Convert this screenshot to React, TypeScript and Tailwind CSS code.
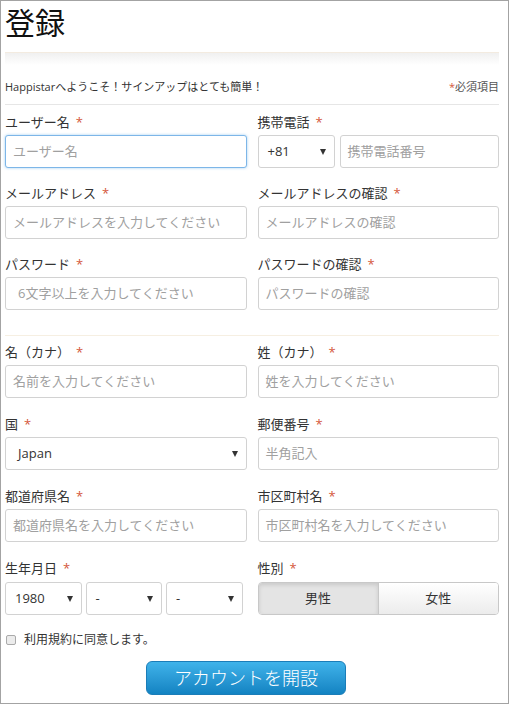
import React from 'react';

const font = { fontFamily: '"Open Sans", "Noto Sans CJK JP", sans-serif' };

const Req: React.FC = () => <span className="ml-[6px] text-[#d4573a]">*</span>;

const Label: React.FC<{ text: string; req?: boolean }> = ({ text, req = true }) => (
  <div className="h-[18px] text-[13px] leading-[18px] text-[#333]">
    {text}
    {req && <Req />}
  </div>
);

const Arrow: React.FC = () => (
  <span className="absolute right-[8px] top-1/2 -translate-y-1/2 border-x-[3.5px] border-t-[6px] border-x-transparent border-t-[#333]"></span>
);

const Input: React.FC<{ placeholder: string; focus?: boolean; className?: string }> = ({ placeholder, focus, className = '' }) => (
  <div
    className={`h-[33px] rounded-[3px] border flex items-center px-[7px] text-[13px] text-[#a0a0a0] bg-white ${
      focus ? 'border-[#7db6e8] shadow-[0_0_3px_rgba(102,175,233,0.6)]' : 'border-[#d2d2d2]'
    } ${className}`}
  >
    {placeholder}
  </div>
);

const Select: React.FC<{ value: string; className?: string }> = ({ value, className = '' }) => (
  <div className={`relative h-[33px] rounded-[3px] border border-[#d2d2d2] bg-white flex items-center pl-[9px] text-[13px] text-[#333] ${className}`}>
    {value}
    <Arrow />
  </div>
);

const Field: React.FC<{ label: string; children: React.ReactNode }> = ({ label, children }) => (
  <div className="flex flex-col gap-[4px]">
    <Label text={label} />
    {children}
  </div>
);

export default function App() {
  return (
    <div style={font} className="w-[509px] h-[704px] border border-[#a3a3a3] bg-white overflow-hidden">
      <div className="pl-[4px] pr-[9px]">
        <h1 className="pt-[3px] text-[30px] leading-[38px] text-[#111] font-normal">登録</h1>
        <div className="mt-[10px] h-px bg-[#f3ebe0]"></div>
        <div className="h-[12px] bg-gradient-to-b from-[#f0f0f0] to-white"></div>
        <div className="mt-[14px] flex justify-between text-[11px] leading-[16px] text-[#333]">
          <span>Happistarへようこそ！サインアップはとても簡単！</span>
          <span className="text-[#555]">
            <span className="text-[#d4573a]">*</span>必須項目
          </span>
        </div>
        <div className="mt-[9px] h-px bg-[#e6e6e6]"></div>

        <div className="mt-[8px] grid grid-cols-2 gap-x-[11px] gap-y-[16px]">
          <Field label="ユーザー名">
            <Input placeholder="ユーザー名" focus />
          </Field>
          <Field label="携帯電話">
            <div className="flex gap-[5px]">
              <Select value="+81" className="w-[77px] shrink-0" />
              <Input placeholder="携帯電話番号" className="flex-1" />
            </div>
          </Field>
          <Field label="メールアドレス">
            <Input placeholder="メールアドレスを入力してください" />
          </Field>
          <Field label="メールアドレスの確認">
            <Input placeholder="メールアドレスの確認" />
          </Field>
          <Field label="パスワード">
            <Input placeholder="6文字以上を入力してください" className="pl-[12px]" />
          </Field>
          <Field label="パスワードの確認">
            <Input placeholder="パスワードの確認" />
          </Field>
        </div>

        <div className="mt-[25px] h-px bg-[#f6efe2]"></div>

        <div className="mt-[7px] grid grid-cols-2 gap-x-[11px] gap-y-[17px]">
          <div className="flex flex-col gap-[4px]">
            <div className="h-[18px] text-[13px] leading-[18px] text-[#333]">
              名（カナ）<Req />
            </div>
            <Input placeholder="名前を入力してください" />
          </div>
          <div className="flex flex-col gap-[4px]">
            <div className="h-[18px] text-[13px] leading-[18px] text-[#333]">
              姓（カナ）<Req />
            </div>
            <Input placeholder="姓を入力してください" />
          </div>
          <Field label="国">
            <Select value="Japan" className="pl-[12px]" />
          </Field>
          <Field label="郵便番号">
            <Input placeholder="半角記入" />
          </Field>
          <Field label="都道府県名">
            <Input placeholder="都道府県名を入力してください" />
          </Field>
          <Field label="市区町村名">
            <Input placeholder="市区町村名を入力してください" />
          </Field>
          <div className="flex flex-col gap-[5px]">
            <Label text="生年月日" />
            <div className="flex gap-[4px] pr-[4px]">
              <Select value="1980" className="flex-1" />
              <Select value="-" className="flex-1" />
              <Select value="-" className="flex-1" />
            </div>
          </div>
          <div className="flex flex-col gap-[5px]">
            <Label text="性別" />
            <div className="h-[33px] flex rounded-[4px] border border-[#c8c8c8] overflow-hidden text-[13px] text-[#333]">
              <div className="w-[120px] flex items-center justify-center bg-[#e4e4e4] border-r border-[#c8c8c8] shadow-[inset_0_2px_4px_rgba(0,0,0,0.12)]">
                男性
              </div>
              <div className="flex-1 flex items-center justify-center bg-gradient-to-b from-white to-[#ececec]">
                女性
              </div>
            </div>
          </div>
        </div>

        <div className="mt-[16px] flex items-center gap-[8px] pl-[1px] h-[18px]">
          <span className="w-[10px] h-[10px] border border-[#aaa] rounded-[2px] bg-[#ececec]"></span>
          <span className="text-[12px] text-[#333]">利用規約に同意します。</span>
        </div>

        <div className="mt-[12px] pl-[141px]">
          <button className="w-[200px] h-[34px] rounded-[6px] border border-[#1b7db8] bg-gradient-to-b from-[#3fb3ea] to-[#1283c2] text-white text-[18px] leading-none font-light">
            アカウントを開設
          </button>
        </div>
      </div>
    </div>
  );
}
